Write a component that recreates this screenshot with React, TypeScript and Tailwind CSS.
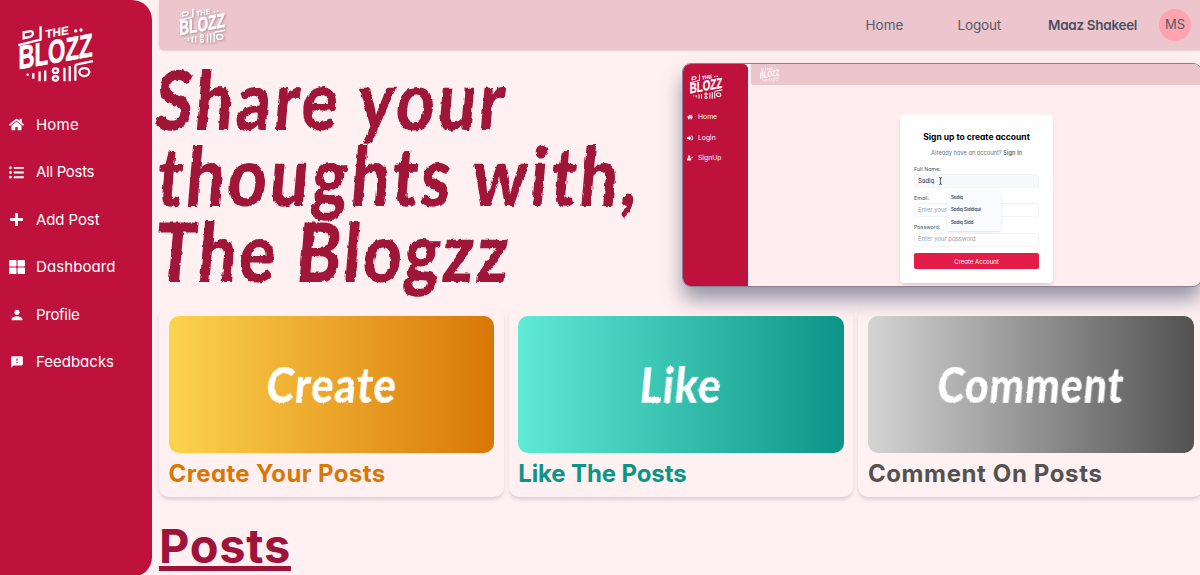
import type { ReactNode } from 'react';
import { FaHome, FaListUl, FaPlus, FaSignInAlt, FaThLarge, FaUserCheck } from 'react-icons/fa';
import { MdFeedback, MdPerson } from 'react-icons/md';

const navItems = [
  { name: 'Home', icon: <FaHome size={15} />, text: 'tracking-[0.2px]' },
  { name: 'All Posts', icon: <FaListUl size={15} />, text: 'tracking-[-0.3px]' },
  { name: 'Add Post', icon: <FaPlus size={15} />, text: 'tracking-[-0.1px]' },
  { name: 'Dashboard', icon: <FaThLarge size={16} />, text: 'tracking-[0.1px]' },
  { name: 'Profile', icon: <MdPerson size={16} />, text: 'tracking-[-0.3px]' },
  { name: 'Feedbacks', icon: <MdFeedback size={14} />, text: 'tracking-[0px]' },
];

const cards = [
  {
    word: 'Create',
    title: 'Create Your Posts',
    gradient: 'bg-[linear-gradient(to_right,#fcd34d,#d97706)]',
    color: 'text-[#d97706] tracking-[0.38px]',
    scale: 'scale-x-[0.86] tracking-[1px]',
  },
  {
    word: 'Like',
    title: 'Like The Posts',
    gradient: 'bg-[linear-gradient(to_right,#5eead4,#0d9488)]',
    color: 'text-[#0d9488] tracking-[-0.12px]',
    scale: 'scale-x-[0.87] tracking-[1px]',
  },
  {
    word: 'Comment',
    title: 'Comment On Posts',
    gradient: 'bg-[linear-gradient(to_right,#d4d4d4,#525252)]',
    color: 'text-[#525252] tracking-[0.62px]',
    scale: 'scale-x-[0.84] tracking-[1px]',
  },
];

function Logo({ className }: { className: string }) {
  return (
    <svg viewBox="22 28 230 172" className={`overflow-visible ${className}`} fill="none" stroke="white" strokeWidth="7">
      <path d="M41 50 L41 68 L60 64 Q69 60 69 54 Q69 45 58 47 Z" />
      <path d="M92 32 V72 L25 89" />
      <g transform="skewY(-10)" fill="white" stroke="white" fontFamily="Liberation Sans" fontWeight="bold">
        <text x="107" y="87" fontSize="35" strokeWidth="0.5" textLength="70" lengthAdjust="spacingAndGlyphs">THE</text>
        <text x="25" y="166" fontSize="99" strokeWidth="2" textLength="224" lengthAdjust="spacingAndGlyphs">BLOZZ</text>
      </g>
      <g fill="white" stroke="none">
        <circle cx="198" cy="46" r="5" />
        <circle cx="214" cy="43" r="5" />
        <circle cx="53" cy="178" r="4" />
      </g>
      <path d="M70 173 V190 M89 168 V198 M106 165 V198 M164 157 V198 M180 152 V198" />
      <path d="M197 196 V152 Q197 148 202 147 L250 137" />
      <ellipse cx="137" cy="166" rx="8" ry="7" />
      <ellipse cx="137" cy="189" rx="8" ry="7" />
      <ellipse cx="224" cy="170" rx="15" ry="12" />
    </svg>
  );
}

function Brush({ children, className }: { children: ReactNode; className: string }) {
  return (
    <span className={`block w-max whitespace-nowrap font-['Lato'] font-black -skew-x-6 ${className}`}>{children}</span>
  );
}

function Sidebar() {
  return (
    <aside className="h-[577px] w-[152px] shrink-0 rounded-r-[20px] bg-[#be123c] pt-[25px] text-white">
      <Logo className="ml-[17px] h-[57px] w-[77px]" />
      <nav className="mt-[19px]">
        {navItems.map((item) => (
          <a key={item.name} className="flex h-[47.5px] items-center">
            <span className="flex w-[33px] justify-center">{item.icon}</span>
            <span className={`ml-[3px] text-[15px] ${item.text}`}>{item.name}</span>
          </a>
        ))}
      </nav>
    </aside>
  );
}

function Header() {
  return (
    <header className="flex h-[50px] items-center rounded-bl-[5px] bg-[#ecc5cd] text-[13.5px] text-[#575a68] shadow-sm">
      <Logo className="ml-[19px] h-[35px] w-[48px] drop-shadow-[1px_1px_1px_rgba(80,50,60,0.4)]" />
      <span className="ml-[639.5px] w-[92px]">Home</span>
      <span className="w-[90.5px] tracking-[-0.15px]">Logout</span>
      <span className="w-[111px] whitespace-nowrap text-[13.5px] font-semibold tracking-[-0.3px] text-[#4b5163]">
        Maaz Shakeel
      </span>
      <span className="flex size-[32px] items-center justify-center rounded-full bg-[#fda4af] text-[13px]">MS</span>
    </header>
  );
}

function Field({ label, children, filled }: { label: string; children: ReactNode; filled?: boolean }) {
  return (
    <div className="h-[29.3px]">
      <p className="h-[9.5px] text-[5.3px] leading-[9px] text-gray-600">{label}</p>
      <div
        className={`flex h-[14px] items-center rounded-[2px] border border-gray-100 pl-[3px] text-[5.9px] ${
          filled ? 'bg-[#f8f9fc] text-gray-800' : 'bg-white text-gray-400'
        }`}
      >
        {children}
      </div>
    </div>
  );
}

function Preview() {
  return (
    <div className="mt-[13px] flex h-[224px] w-[520px] shrink-0 overflow-hidden rounded-[9px] border border-[#8d7f92] bg-[#feeef0] shadow-[0_13px_20px_-1px_rgba(71,85,115,0.6)]">
      <div className="w-[65px] shrink-0 rounded-tr-[5px] bg-[#be123c] pt-[10px] text-white">
        <Logo className="ml-[6px] h-[25px] w-[34px]" />
        <div className="mt-[8px] text-[6.8px]">
          <p className="flex h-[20.5px] items-center gap-[5px] pl-[4px]">
            <FaHome size={6} /> Home
          </p>
          <p className="flex h-[20.5px] items-center gap-[5px] pl-[4px]">
            <FaSignInAlt size={6} /> Login
          </p>
          <p className="flex h-[20.5px] items-center gap-[5px] pl-[4px]">
            <FaUserCheck size={6} /> SignUp
          </p>
        </div>
      </div>
      <div className="ml-[3px] flex-1">
        <div className="h-[21px] rounded-bl-[2px] bg-[#ecc5cd] pl-[8px] pt-[3px]">
          <Logo className="h-[15px] w-[21px] opacity-80" />
        </div>
        <div className="relative ml-[149px] mt-[30px] h-[168px] w-[153px] rounded-[4px] bg-white px-[14px] pt-[16.5px] shadow-md">
          <h3 className="whitespace-nowrap text-center text-[8.5px] font-bold leading-[10px] text-black">
            Sign up to create account
          </h3>
          <p className="mb-[8px] mt-[7px] whitespace-nowrap text-center text-[5.7px] leading-[8px] text-gray-500">
            Already have an account? <span className="font-medium text-gray-600">Sign In</span>
          </p>
          <Field label="Full Name:" filled>
            Sadiq
            <svg viewBox="0 0 5 8" className="ml-[4px] h-[8px] w-[5px]" fill="none" stroke="#222" strokeWidth="0.7">
              <path d="M1 .5 Q2.5 .5 2.5 1.5 Q2.5 .5 4 .5 M2.5 1 V7 M1 7.5 Q2.5 7.5 2.5 6.5 Q2.5 7.5 4 7.5" />
            </svg>
          </Field>
          <Field label="Email:">Enter your</Field>
          <Field label="Password:">Enter your password</Field>
          <div className="mt-[1px] flex h-[16px] items-center justify-center rounded-[2px] bg-[#e11d48] text-[6px] text-white">
            Create Account
          </div>
          {/* autofill suggestions */}
          <div className="absolute left-[47px] top-[76px] h-[40px] w-[54px] rounded-[2px] bg-[#f9fbfe] pl-[4px] pt-[1px] text-[4.3px] font-semibold leading-[12.3px] text-gray-700 shadow">
            <p>Sadiq</p>
            <p>Sadiq Siddiqui</p>
            <p>Sadiq Sidd</p>
          </div>
        </div>
      </div>
    </div>
  );
}

export default function App() {
  return (
    <div className="flex h-[575px] w-[1200px] overflow-hidden bg-[#fff0f1] font-['Inter',sans-serif] [font-feature-settings:'cv11']">
      {/* dry brush edges for the display words */}
      <svg className="absolute size-0">
        <filter id="brush" x="-5%" y="-10%" width="110%" height="120%">
          <feTurbulence type="fractalNoise" baseFrequency="0.25 0.12" numOctaves="2" seed="4" result="noise" />
          <feDisplacementMap in="SourceGraphic" in2="noise" scale="3.5" xChannelSelector="R" yChannelSelector="G" />
        </filter>
        <filter id="brush-small" x="-5%" y="-10%" width="110%" height="120%">
          <feTurbulence type="fractalNoise" baseFrequency="0.3 0.15" numOctaves="2" seed="7" result="noise" />
          <feDisplacementMap in="SourceGraphic" in2="noise" scale="2.5" xChannelSelector="R" yChannelSelector="G" />
        </filter>
      </svg>
      <Sidebar />
      <main className="ml-[7px] w-[1046px] shrink-0">
        <Header />
        <section className="flex h-[256.5px]">
          <h1 className="w-[523px] shrink-0 pt-[10px] text-[82px] leading-[76px] text-[#9f1239] [filter:url(#brush)]">
            <Brush className="-ml-[3px] origin-left scale-x-[0.83] tracking-[3.3px]">Share your</Brush>
            <Brush className="-ml-[1px] origin-left scale-x-[0.83] tracking-[3.7px]">thoughts with,</Brush>
            <Brush className="-ml-[3px] origin-left scale-x-[0.83] tracking-[2.8px]">The Blogzz</Brush>
          </h1>
          <Preview />
        </section>
        <section className="flex gap-[5px]">
          {cards.map((card) => (
            <div
              key={card.word}
              className="h-[190px] w-[344.7px] shrink-0 rounded-[10px] px-[9.5px] pt-[9.5px] shadow-[0_3px_4px_-1px_rgba(71,85,120,0.25)]"
            >
              <div className={`flex h-[137px] items-center justify-center rounded-[10px] text-[49px] text-white ${card.gradient}`}>
                <Brush className={`[filter:url(#brush-small)] ${card.scale}`}>{card.word}</Brush>
              </div>
              <h2 className={`mt-[5px] whitespace-nowrap text-[24px] font-bold leading-[32px] ${card.color}`}>{card.title}</h2>
            </div>
          ))}
        </section>
        <h2 className="mt-[13px] w-max text-[47px] font-bold leading-[72px] tracking-[0.7px] text-[#9f1239] underline decoration-[4.5px] underline-offset-[3px] [text-decoration-skip-ink:none]">
          Posts
        </h2>
      </main>
    </div>
  );
}
